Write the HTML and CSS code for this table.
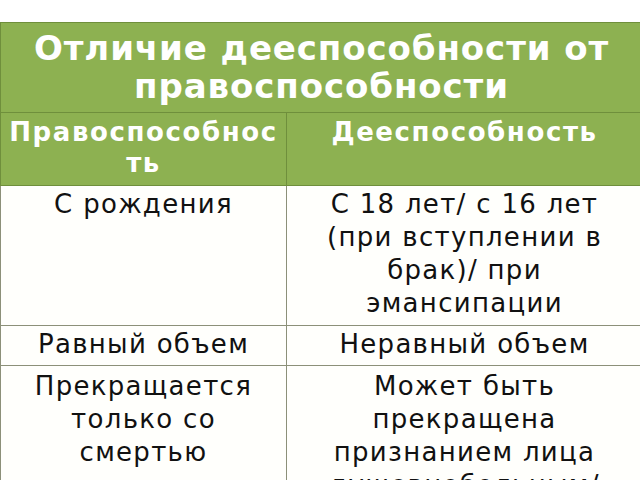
FILE: index.html
```html
<!DOCTYPE html>
<html lang="ru">
<head>
<meta charset="utf-8">
<link rel="stylesheet" href="styles.css">
</head>
<body>
<table class="grid">
  <colgroup><col class="c1"><col class="c2"></colgroup>
  <tr class="r-title"><th colspan="2" class="title">Отличие дееспособности от<br>правоспособности</th></tr>
  <tr class="r-sub"><th class="sub">Правоспособнос<br>ть</th><th class="sub">Дееспособность</th></tr>
  <tr class="r-a"><td>С рождения</td><td>С 18 лет/ с 16 лет<br>(при вступлении в<br>брак)/ при<br>эмансипации</td></tr>
  <tr class="r-b"><td>Равный объем</td><td>Неравный объем</td></tr>
  <tr class="r-c"><td>Прекращается<br>только со<br>смертью</td><td>Может быть<br>прекращена<br>признанием лица<br>душевнобольным/</td></tr>
</table>
</body>
</html>
```
FILE: styles.css
```css
html, body {
  margin: 0;
  padding: 0;
  background: #ffffff;
  overflow: hidden;
  width: 640px;
  height: 480px;
}
.grid {
  margin-top: 22px;
  width: 642px;
  border-collapse: collapse;
  table-layout: fixed;
  font-family: "DejaVu Sans", sans-serif;
}
.c1 { width: 286px; }
.c2 { width: 356px; }
th, td {
  text-align: center;
  vertical-align: top;
  padding: 0;
  white-space: nowrap;
  overflow: hidden;
}
th {
  background: #8db151;
  color: #ffffff;
  border: 1px solid #6f8f3c;
}
td {
  background: #fffffc;
  color: #111111;
  border: 1px solid #8c9079;
  font-size: 26px;
  letter-spacing: 1.3px;
  line-height: 33px;
}
.title {
  font-size: 34px;
  letter-spacing: 0.9px;
  line-height: 38px;
  height: 90px;
  padding-top: 6px;
  box-sizing: border-box;
}
.sub {
  font-size: 26px;
  letter-spacing: 1.6px;
  line-height: 31px;
  height: 73px;
  padding-top: 4px;
  box-sizing: border-box;
}
.r-a td { height: 140px; padding-top: 2px; box-sizing: border-box; }
.r-b td { height: 40px; padding-top: 2px; box-sizing: border-box; }
.r-c td { height: 130px; padding-top: 4px; box-sizing: border-box; }
```
